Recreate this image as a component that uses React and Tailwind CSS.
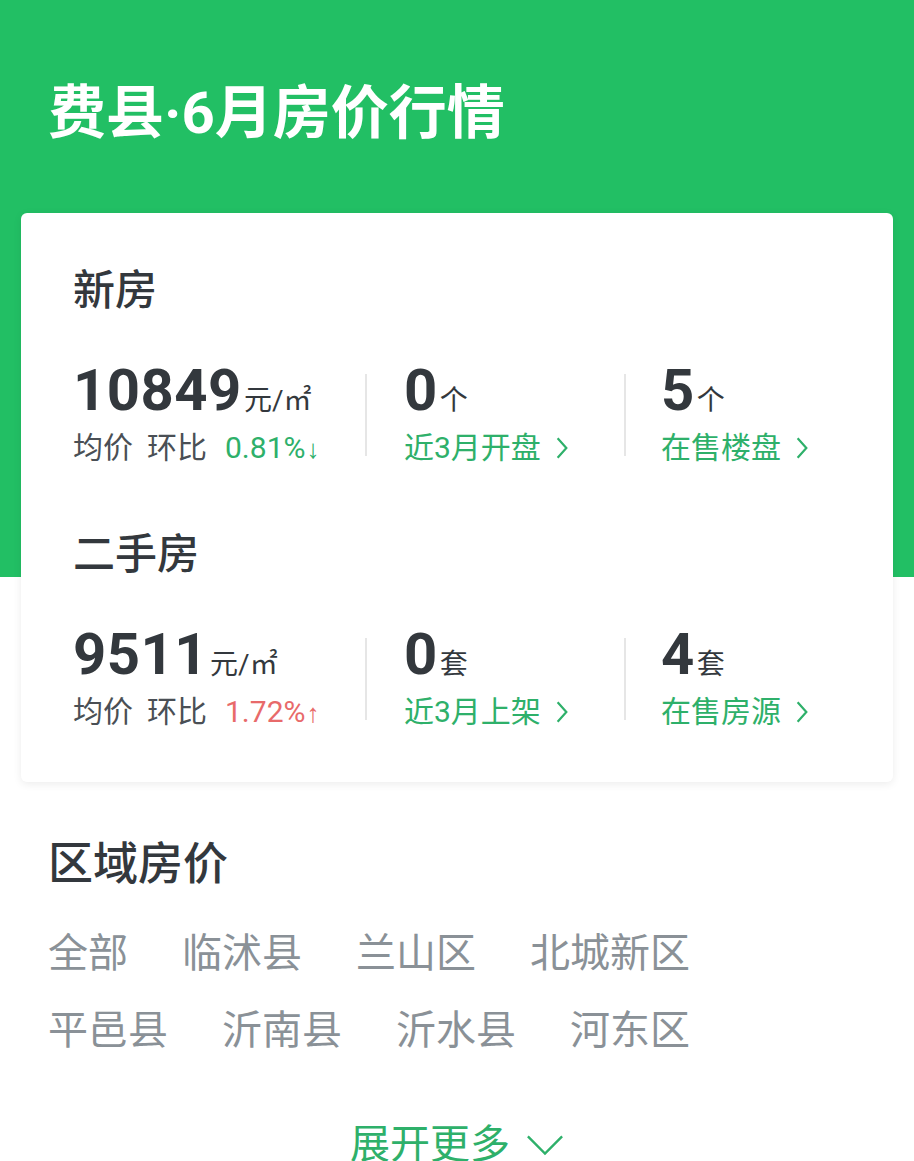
const cjk = { fontFamily: 'Roboto, "Noto Sans CJK SC", sans-serif' }

function Chevron({ className = '' }) {
  return (
    <svg viewBox="0 0 12 22" className={className} fill="none" stroke="currentColor" strokeWidth="2">
      <polyline points="2,2 10,11 2,20" />
    </svg>
  )
}

function Arrow({ children }) {
  return <span className="font-['Liberation_Sans'] text-[26px] ml-[1px]">{children}</span>
}

function Stat({ value, unit, children, w }) {
  return (
    <div className={w}>
      <div className="flex items-baseline">
        <span className="text-[58px] font-bold leading-[62px] text-[#33383d] tracking-[0.5px]">{value}</span>
        <span className="text-[28px] text-[#33383d] ml-[2px]">{unit}</span>
      </div>
      <div className="text-[30px] leading-[36px] mt-[8px]">{children}</div>
    </div>
  )
}

function Divider() {
  return <div className="w-[2px] h-[82px] bg-[#e6e6e6] self-center mt-[4px] shrink-0" />
}

function Link({ label }) {
  return (
    <span className="flex items-center text-[#2eb06a]">
      {label}
      <Chevron className="w-[14px] h-[24px] ml-[14px]" />
    </span>
  )
}

function Section({ title, price, change, up, c2, c2label, c3, c3label, unit }) {
  return (
    <div>
      <div className="text-[42px] leading-[48px] text-[#33383d] font-medium">{title}</div>
      <div className="flex mt-[44px]">
        <Stat w="w-[292px] shrink-0" value={price} unit="元/㎡">
          <span className="text-[#4a4f55]">均价</span>
          <span className="text-[#4a4f55] ml-[14px]">环比</span>
          <span className={`ml-[18px] ${up ? 'text-[#e86a6a]' : 'text-[#2eb06a]'}`}>
            {change}
            <Arrow>{up ? '↑' : '↓'}</Arrow>
          </span>
        </Stat>
        <Divider />
        <Stat w="w-[257px] shrink-0 pl-[37px]" value={c2} unit={unit}>
          <Link label={c2label} />
        </Stat>
        <Divider />
        <Stat w="flex-1 pl-[35px]" value={c3} unit={unit}>
          <Link label={c3label} />
        </Stat>
      </div>
    </div>
  )
}

export default function App() {
  const rows = [
    ['全部', '临沭县', '兰山区', '北城新区'],
    ['平邑县', '沂南县', '沂水县', '河东区'],
  ]
  return (
    <div className="w-[914px] h-[1161px] overflow-hidden bg-[linear-gradient(#22bf64_577px,#ffffff_577px)]" style={cjk}>
      <div className="h-[213px] px-[48px] pt-[78px]">
        <h1 className="text-[58px] leading-[70px] font-bold text-white">费县·6月房价行情</h1>
      </div>

      <div className="mx-[21px] bg-white rounded-[6px] shadow-[0_2px_8px_rgba(0,0,0,0.08)] px-[52px] pt-[54px] pb-[51px]">
        <Section title="新房" price="10849" change="0.81%" c2="0" c2label="近3月开盘" c3="5" c3label="在售楼盘" unit="个" />
        <div className="h-[64px]" />
        <Section title="二手房" price="9511" change="1.72%" up c2="0" c2label="近3月上架" c3="4" c3label="在售房源" unit="套" />
      </div>

      <div className="px-[48px] pt-[56px]">
        <h2 className="text-[45px] leading-[54px] font-medium text-[#33383d]">区域房价</h2>
        <div className="mt-[38px] flex flex-col gap-[29px]">
          {rows.map((r, i) => (
            <div key={i} className="flex gap-[54px] text-[40px] leading-[48px] text-[#8a9197]">
              {r.map((t) => (
                <span key={t}>{t}</span>
              ))}
            </div>
          ))}
        </div>
        <div className="mt-[66px] flex justify-center items-center text-[40px] leading-[48px] text-[#2eb06a]">
          展开更多
          <svg viewBox="0 0 40 22" className="w-[38px] h-[22px] ml-[16px]" fill="none" stroke="currentColor" strokeWidth="2.5">
            <polyline points="2,2 20,20 38,2" />
          </svg>
        </div>
      </div>
    </div>
  )
}
